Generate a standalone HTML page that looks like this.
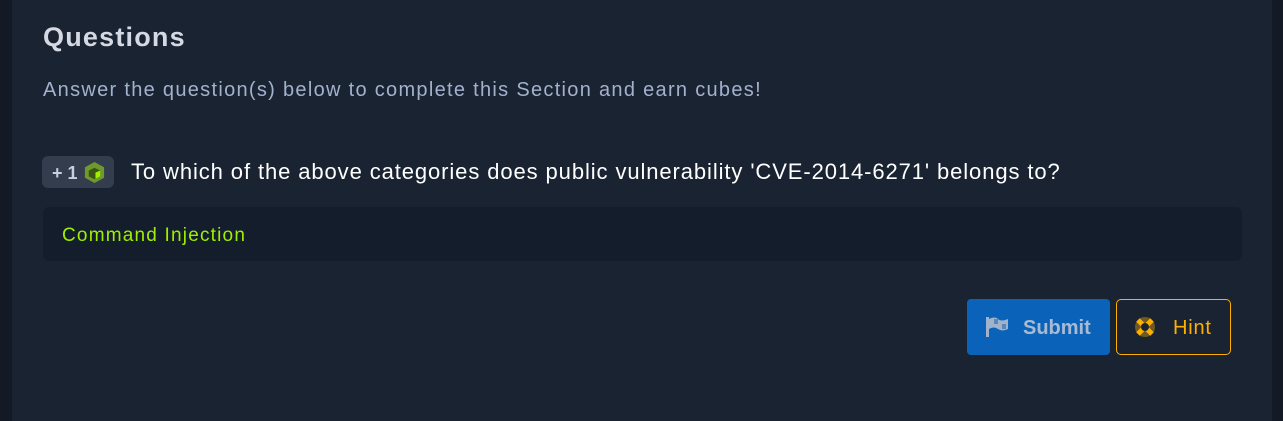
<!DOCTYPE html><html><head><style>
body{margin:0;width:1283px;height:421px;background:#141a25;font-family:"Liberation Sans",sans-serif;overflow:hidden;position:relative}
.p{position:absolute;left:12px;top:0;width:1260px;height:421px;background:#1a2332}
.a{position:absolute;white-space:nowrap}
</style></head><body><div class="p"></div>
<div class="a" style="left:43px;top:22px;font-size:27px;font-weight:bold;color:#d4d9e3;letter-spacing:1.2px">Questions</div>
<div class="a" style="left:43px;top:79px;font-size:20px;color:#a4b1cd;letter-spacing:1.3px">Answer the question(s) below to complete this Section and earn cubes!</div>
<div class="a" style="left:42px;top:156px;width:72px;height:32px;background:#343d4d;border-radius:6px"></div>
<div class="a" style="left:52px;top:163px;font-size:18px;font-weight:bold;color:#c8cfdb">+ 1</div>
<svg class="a" style="left:83px;top:161px" width="23" height="23" viewBox="0 0 24 24"><path d="M12 1L22 6.5V17.5L12 23L2 17.5V6.5Z" fill="#6d9a2a"/><path d="M12 7L18 10V16L12 19L6 16V10Z" fill="#3b5414"/><path d="M13 12L18 10V16L13 18.5Z" fill="#9fef00"/></svg>
<div class="a" style="left:131px;top:159px;font-size:22px;color:#fff;letter-spacing:0.9px">To which of the above categories does public vulnerability 'CVE-2014-6271' belongs to?</div>
<div class="a" style="left:43px;top:207px;width:1199px;height:54px;background:#141d2b;border-radius:6px"></div>
<div class="a" style="left:62px;top:225px;font-size:19px;color:#9fef00;letter-spacing:1.2px">Command Injection</div>
<div class="a" style="left:967px;top:299px;width:143px;height:56px;background:#0a63b8;border-radius:4px"></div>
<svg class="a" style="left:985px;top:316px" width="24" height="22" viewBox="0 0 24 22"><rect x="1" y="1" width="3" height="20" fill="#9fb3cc"/><path d="M4 3Q10 0 13 3T23 3V13Q17 16 13 13T4 13Z" fill="#9fb3cc"/><rect x="9" y="3" width="4" height="5" fill="#5c86ba"/><rect x="17" y="8" width="4" height="5" fill="#5c86ba"/></svg>
<div class="a" style="left:1023px;top:317px;font-size:20px;font-weight:bold;color:#a9bbd3">Submit</div>
<div class="a" style="left:1116px;top:299px;width:113px;height:54px;border:1px solid #ffaf00;border-radius:5px"></div>
<svg class="a" style="left:1134px;top:316px" width="22" height="22" viewBox="0 0 22 22"><circle cx="11" cy="11" r="10" fill="#6e5a1e"/><path d="M4 4L18 18M18 4L4 18" stroke="#ffaf00" stroke-width="5"/><circle cx="11" cy="11" r="4" fill="#1a2332"/></svg>
<div class="a" style="left:1173px;top:317px;font-size:20px;color:#ffaf00;letter-spacing:0.8px">Hint</div>
</body></html>
